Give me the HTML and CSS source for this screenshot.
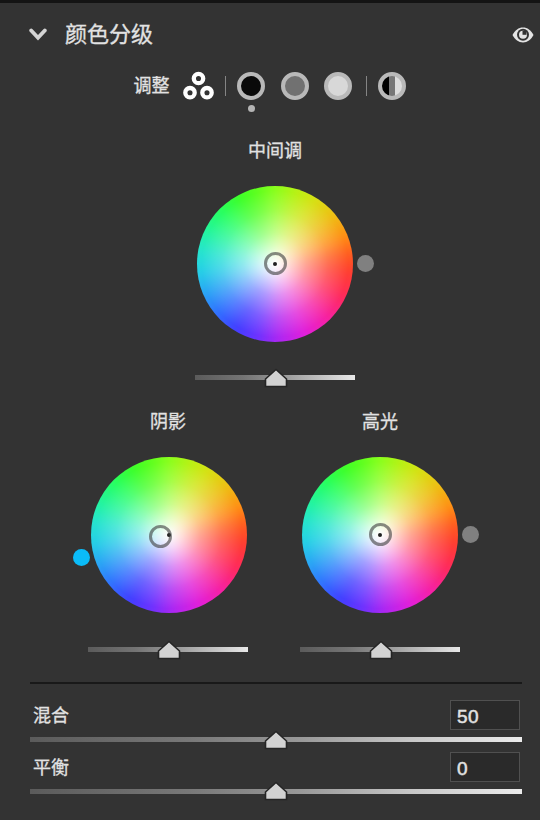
FILE: index.html
```html
<!DOCTYPE html>
<html lang="zh-CN">
<head>
<meta charset="utf-8">
<title>颜色分级</title>
<link rel="stylesheet" href="styles.css">
</head>
<body>
<main class="panel">
  <header class="header">
    <svg class="chevron" width="18" height="14" viewBox="0 0 18 14"><path d="M2.2 3.500 9 10.800 15.800 3.500" fill="none" stroke="#d4d4d4" stroke-width="3.800" stroke-linecap="round"/></svg>
    <h1 class="title">颜色分级</h1>
    <svg class="eye" width="22" height="18" viewBox="0 0 22 18"><path d="M.5 9C3.200 4.200 6.500 1.600 11 1.600S18.800 4.200 21.500 9C18.800 13.800 15.500 16.400 11 16.400S3.200 13.800.5 9Z" fill="#e4e4e4"/><circle cx="11" cy="8.800" r="6" fill="#333"/><circle cx="11" cy="8.800" r="4" fill="#e4e4e4"/><path d="M10.500 8.800V5h4v3.800Z" fill="#333"/></svg>
  </header>

  <nav class="modes">
    <span class="modes-label">调整</span>
    <svg class="three" width="32" height="30" viewBox="0 0 32 30"><g fill="#333" stroke="#fff" stroke-width="4.300"><circle cx="15.500" cy="7.500" r="4.700"/><circle cx="7" cy="21.700" r="4.700"/><circle cx="24" cy="21.700" r="4.700"/></g></svg>
    <i class="separator"></i>
    <span class="mode mode-shadows"></span>
    <span class="mode mode-midtones"></span>
    <span class="mode mode-highlights"></span>
    <i class="separator"></i>
    <span class="mode mode-global"></span>
  </nav>

  <section class="wheel-group">
    <h2 class="wheel-name">中间调</h2>
    <div class="wheel"><span class="disc"></span><span class="dot"></span><span class="ring"></span><span class="hue"></span></div>
    <div class="slider"><svg class="thumb" width="24" height="20" viewBox="0 0 24 20"><path d="M12 1.500 22.500 11V18.500H1.500V11Z" fill="#d2d2d2" stroke="#252525" stroke-width="1.600"/></svg></div>
  </section>

  <div class="wheel-row">
    <section class="wheel-group">
      <h2 class="wheel-name">阴影</h2>
      <div class="wheel"><span class="disc"></span><span class="dot"></span><span class="ring ring-tinted"></span><span class="hue hue-tinted"></span></div>
      <div class="slider"><svg class="thumb" width="24" height="20" viewBox="0 0 24 20"><path d="M12 1.500 22.500 11V18.500H1.500V11Z" fill="#d2d2d2" stroke="#252525" stroke-width="1.600"/></svg></div>
    </section>
    <section class="wheel-group">
      <h2 class="wheel-name">高光</h2>
      <div class="wheel"><span class="disc"></span><span class="dot"></span><span class="ring"></span><span class="hue"></span></div>
      <div class="slider"><svg class="thumb" width="24" height="20" viewBox="0 0 24 20"><path d="M12 1.500 22.500 11V18.500H1.500V11Z" fill="#d2d2d2" stroke="#252525" stroke-width="1.600"/></svg></div>
    </section>
  </div>

  <section class="controls">
    <div class="control">
      <div class="control-head"><span>混合</span><span class="value">50</span></div>
      <div class="slider"><svg class="thumb" width="24" height="20" viewBox="0 0 24 20"><path d="M12 1.500 22.500 11V18.500H1.500V11Z" fill="#d2d2d2" stroke="#252525" stroke-width="1.600"/></svg></div>
    </div>
    <div class="control">
      <div class="control-head"><span>平衡</span><span class="value">0</span></div>
      <div class="slider"><svg class="thumb" width="24" height="20" viewBox="0 0 24 20"><path d="M12 1.500 22.500 11V18.500H1.500V11Z" fill="#d2d2d2" stroke="#252525" stroke-width="1.600"/></svg></div>
    </div>
  </section>
</main>
</body>
</html>
```
FILE: styles.css
```css
* { box-sizing: border-box; }
body {
  margin: 0;
  background: #333;
  color: #e2e2e2;
  font: 400 18px/26px "Noto Sans CJK SC", sans-serif;
  -webkit-text-stroke: .3px currentColor;
}
.panel {
  height: 820px;
  border-top: 3px solid #141414;
  overflow: hidden;
}
.header {
  display: flex;
  align-items: center;
  height: 62px;
  padding: 0 5px 0 29px;
}
.title {
  margin: 0 0 5px 18px;
  font-size: 22px;
  line-height: 32px;
  font-weight: 400;
}
.eye { margin: 2px 1px 0 auto; }

.modes {
  display: flex;
  align-items: center;
  height: 42px;
  padding-left: 133.5px;
}
.modes-label { width: 36px; margin-bottom: 4px; }
.three { margin: 0 10.5px 0 13px; }
.separator { width: 1px; height: 20px; background: #858585; }
.mode {
  position: relative;
  width: 28px;
  height: 28px;
  margin-left: 15.5px;
  border: 4px solid #b9b9b9;
  border-radius: 50%;
}
.separator + .mode { margin-left: 11px; }
.mode-highlights { margin-right: 13.5px; }
.mode-shadows { background: #0a0a0a; }
.mode-shadows::after {
  content: "";
  position: absolute;
  left: 6.5px;
  top: 29px;
  width: 7px;
  height: 7px;
  border-radius: 50%;
  background: #b5b5b5;
}
.mode-midtones { background: #717171; }
.mode-highlights { background: #d8d8d8; }
.mode-global { background: linear-gradient(90deg, #000 37%, #777 37% 66%, #ddd 66%); }

.wheel-group { width: 160px; }
.panel > .wheel-group { margin: 29px 0 0 195px; }
.wheel-name {
  margin: 0 0 24px;
  font-size: 18px;
  font-weight: 400;
  line-height: 26px;
  text-align: center;
}
.wheel {
  position: relative;
  width: 156px;
  height: 156px;
  margin: 0 auto 33px;
}
.disc {
  position: absolute;
  inset: 0;
  border-radius: 50%;
  overflow: hidden;
}
.disc::before {
  content: "";
  position: absolute;
  inset: -12px;
  background: conic-gradient(#84ff12, #b6f008 17deg, #d4e008 31deg, #edbc08 50deg, #ff8a08 68deg, #ff5514 82deg, #ff3425 96deg, #ff2050 115deg, #f615a0 137deg, #df14da 157deg, #a91bf2 177deg, #6228ff 194deg, #3834ff 211deg, #2768ff 229deg, #209ff5 247deg, #1bcde6 264deg, #1be3cc 280deg, #18f49b 295deg, #1cff59 314deg, #33ff1d 332deg, #55ff12 346deg, #84ff12);
  filter: blur(5px);
}
.disc::after {
  content: "";
  position: absolute;
  inset: 0;
  background: radial-gradient(circle closest-side, #fff 0%, rgba(255,255,255,.82) 17%, rgba(255,255,255,.52) 40%, rgba(255,255,255,.24) 68%, rgba(255,255,255,.05) 94%);
}
.wheel-row .wheel-group:first-child .wheel { left: 1px; }
.ring {
  position: absolute;
  left: 66.5px;
  top: 66px;
  width: 23px;
  height: 23px;
  border: 3px solid rgba(60,60,60,.6);
  border-radius: 50%;
}
.ring-tinted { left: 57.5px; top: 68px; }
.dot {
  position: absolute;
  left: 76px;
  top: 75.5px;
  width: 4px;
  height: 4px;
  border-radius: 50%;
  background: #202020;
}
.hue {
  position: absolute;
  left: 159.5px;
  top: 69px;
  width: 17px;
  height: 17px;
  border-radius: 50%;
  background: #808080;
}
.hue-tinted { left: -18px; top: 92px; background: #0bbcf8; }
.slider {
  position: relative;
  height: 5px;
  background: linear-gradient(90deg, #5b5b5b, #747474 30%, #999 55%, #e8e8e8);
}
.thumb {
  position: absolute;
  left: calc(50% - 11.4px);
  top: -7.5px;
}
.wheel-row {
  display: flex;
  gap: 52px;
  margin: 27px 0 0 88px;
}
.wheel-row .wheel-name { margin-bottom: 24px; }
.wheel-row .wheel { margin-bottom: 34px; }

.controls {
  margin: 30px 18px 0 30px;
  padding-top: 16px;
  border-top: 2px solid #191919;
}
.control { height: 51.5px; }
.control-head {
  display: flex;
  align-items: center;
  justify-content: space-between;
  height: 30px;
  margin-bottom: 7px;
  padding: 0 2px 0 3px;
}
.control-head > :first-child { margin-bottom: 2px; }
.value {
  width: 70px;
  height: 30px;
  padding: 3px 6px;
  border: 1px solid #505050;
  background: #2a2a2a;
  font-family: "Liberation Sans", sans-serif;
  font-size: 19px;
  letter-spacing: .4px;
  -webkit-text-stroke-width: .5px;
}
.controls .slider { background: linear-gradient(90deg, #5b5b5b, #787878 32%, #999 55%, #c6c6c6 77%, #ececec); }
.controls .thumb { left: calc(50% - 12px); }
```
